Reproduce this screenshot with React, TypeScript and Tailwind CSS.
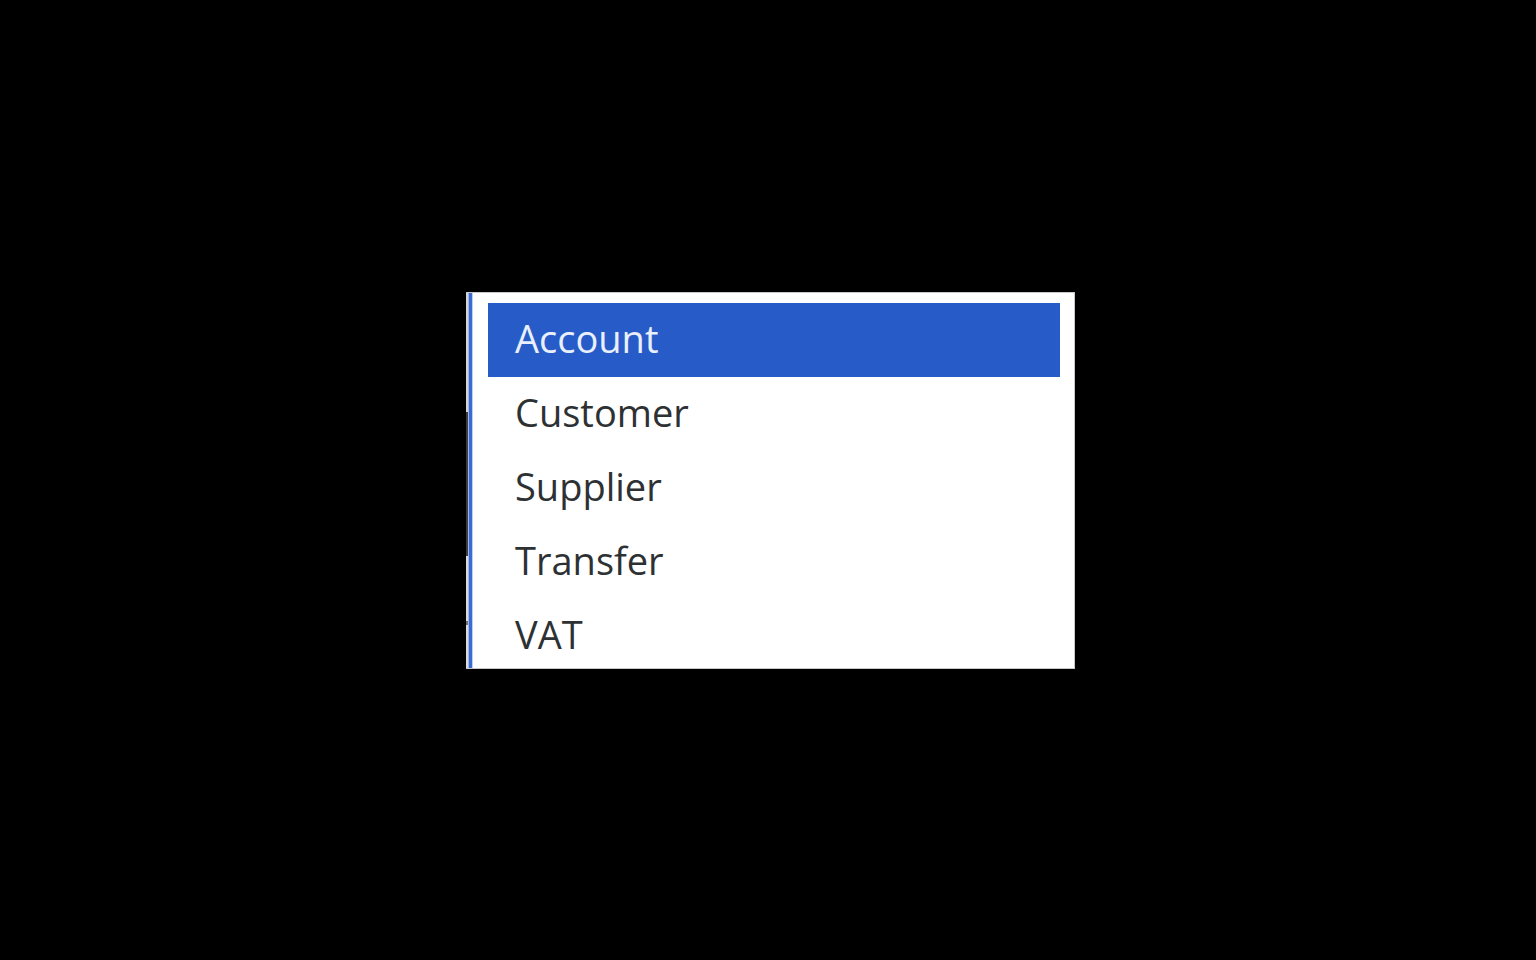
import React from "react";

const items = ["Account", "Customer", "Supplier", "Transfer", "VAT"];

export default function App() {
  return (
    <div className="w-[1536px] h-[960px] bg-black pl-[466px] pt-[292px]">
      <div className="flex w-[609px] h-[377px] bg-white border-t border-r border-b border-[#c8c8c8] overflow-hidden">
        <div className="flex flex-col w-[2px] shrink-0">
          <div className="h-[119px] bg-[#d4d4d4]" />
          <div className="h-[144px] bg-[#3d3d3d]" />
          <div className="h-[65px] bg-[#dadada]" />
          <div className="h-[4px] bg-[#707070]" />
          <div className="flex-1 bg-[#dadada]" />
        </div>
        <div className="w-[1px] shrink-0 bg-[#9fb6e6]" />
        <div className="w-[3px] shrink-0 bg-[#3a6bd2]" />
        <div className="w-[1px] shrink-0 bg-[#bcd0f2]" />
        <div className="flex-1 pt-[10px] pl-[15px] pr-[14px]">
          {items.map((it, i) => (
            <div
              key={it}
              className={
                i === 0
                  ? "h-[74px] flex items-center pl-[27px] bg-[#275cc8] text-[#e9effb]"
                  : "h-[74px] flex items-center pl-[27px] text-[#2e3133]"
              }
              style={{ fontFamily: "'Open Sans', 'Noto Sans', sans-serif" }}
            >
              <span className="text-[38px] leading-none pb-[4px]">{it}</span>
            </div>
          ))}
        </div>
      </div>
    </div>
  );
}
